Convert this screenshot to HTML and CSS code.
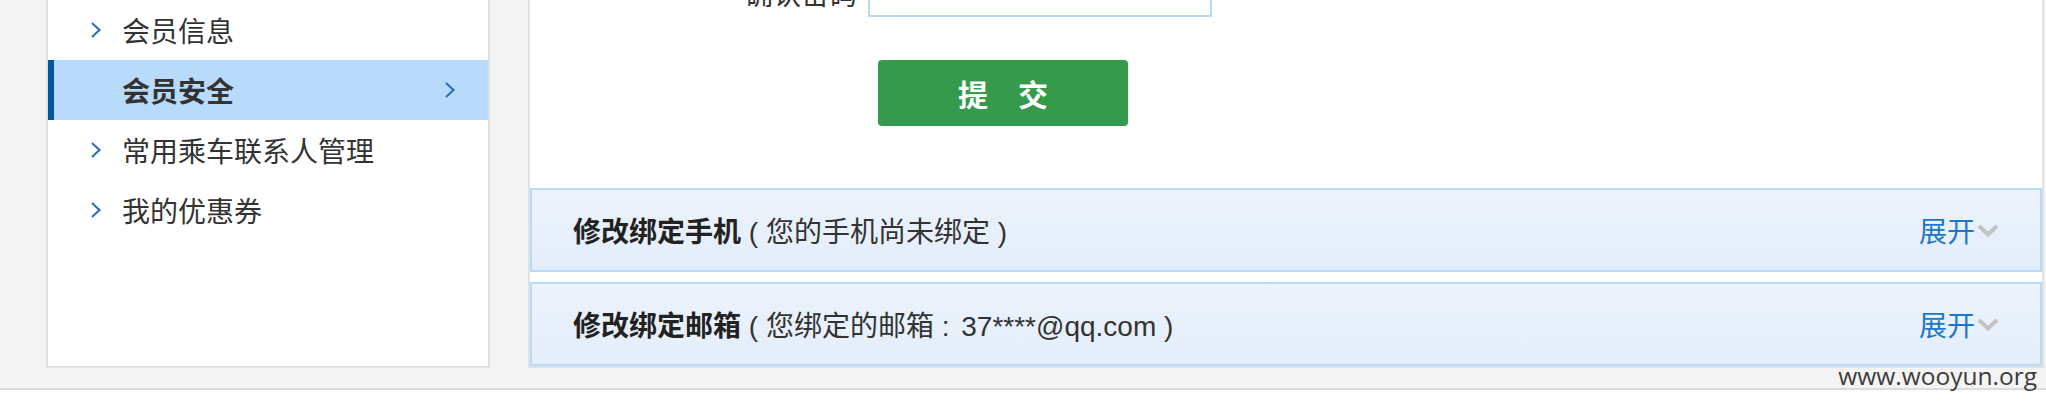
FILE: index.html
```html
<!DOCTYPE html>
<html lang="zh-CN">
<head>
<meta charset="utf-8">
<title>会员安全</title>
<link rel="stylesheet" href="styles.css">
</head>
<body>
<div class="page">
  <div class="layout">
    <aside class="sidebar">
      <ul class="menu">
        <li class="menu-item">
          <svg class="chev" viewBox="0 0 12 18"><polyline points="2,2 9.5,9 2,16"/></svg>
          <span>会员信息</span>
        </li>
        <li class="menu-item active">
          <span>会员安全</span>
          <svg class="chev" viewBox="0 0 12 18"><polyline points="2,2 9.5,9 2,16"/></svg>
        </li>
        <li class="menu-item">
          <svg class="chev" viewBox="0 0 12 18"><polyline points="2,2 9.5,9 2,16"/></svg>
          <span>常用乘车联系人管理</span>
        </li>
        <li class="menu-item">
          <svg class="chev" viewBox="0 0 12 18"><polyline points="2,2 9.5,9 2,16"/></svg>
          <span>我的优惠券</span>
        </li>
      </ul>
    </aside>
    <main class="main">
      <div class="form-row">
        <label class="form-label">确认密码</label>
        <div class="input"></div>
      </div>
      <button class="btn">提　交</button>
      <div class="acc-list">
        <div class="acc">
          <div class="acc-title"><b>修改绑定手机</b><span> ( 您的手机尚未绑定 )</span></div>
          <div class="acc-toggle">展开<svg class="down" viewBox="0 0 22 13"><polyline points="2,2 11,10.5 20,2"/></svg></div>
        </div>
        <div class="acc">
          <div class="acc-title"><b>修改绑定邮箱</b><span> ( 您绑定的邮箱<span class="colon"> : </span>37****@qq.com )</span></div>
          <div class="acc-toggle">展开<svg class="down" viewBox="0 0 22 13"><polyline points="2,2 11,10.5 20,2"/></svg></div>
        </div>
      </div>
    </main>
  </div>
  <footer class="footer"></footer>
  <div class="watermark">www.wooyun.org</div>
</div>
</body>
</html>
```

FILE: styles.css
```css
html, body {
  margin: 0;
  padding: 0;
}

body {
  background: #f4f4f4;
  font-family: "Liberation Sans", "Noto Sans CJK SC", sans-serif;
  font-size: 28px;
  color: #333;
  height: 406px;
  overflow: hidden;
}

.page {
  position: relative;
  height: 406px;
}

.layout {
  display: flex;
  align-items: stretch;
  gap: 38px;
  padding: 0 2px 20px 46px;
}

/* Sidebar */
.sidebar {
  width: 444px;
  box-sizing: border-box;
  background: #fff;
  border: 2px solid #e1e1e1;
  border-top: none;
}

.menu {
  list-style: none;
  margin: 0;
  padding: 0;
}

.menu-item {
  display: flex;
  align-items: center;
  height: 60px;
  padding-left: 42px;
  color: #333;
}

.menu-item .chev {
  width: 12px;
  height: 18px;
  margin-right: 20px;
  flex: none;
}

.chev polyline {
  fill: none;
  stroke: #2f70b8;
  stroke-width: 2.2;
}

.menu-item.active {
  background: #b8dbfb;
  border-left: 6px solid #0055a5;
  padding-left: 68px;
  padding-right: 32px;
  justify-content: space-between;
  font-weight: bold;
  color: #333;
}

.menu-item.active .chev {
  margin-right: 0;
}

/* Main */
.main {
  flex: 1;
  box-sizing: border-box;
  background: #fff;
  border: 2px solid #e1e1e1;
  border-top: none;
}

.form-row {
  display: flex;
  align-items: center;
  height: 48px;
  margin-top: -31px;
}

.form-label {
  width: 327px;
  margin-right: 11px;
  text-align: right;
  color: #333;
}

.input {
  width: 344px;
  height: 48px;
  box-sizing: border-box;
  border: 2px solid #b9d9f9;
  background: #fff;
}

.btn {
  display: block;
  margin: 43px 0 0 348px;
  width: 250px;
  height: 66px;
  padding: 0;
  border: none;
  border-radius: 4px;
  background: #359a4b;
  color: #fff;
  font-family: "Liberation Sans", "Noto Sans CJK SC", sans-serif;
  font-size: 30px;
  font-weight: bold;
}

.acc-list {
  margin-top: 62px;
  display: flex;
  flex-direction: column;
  gap: 10px;
}

.acc {
  height: 84px;
  box-sizing: border-box;
  border: 2px solid #b6dbfb;
  background: linear-gradient(#ecf3fc, #e3edfa);
  display: flex;
  align-items: center;
  justify-content: space-between;
  padding: 0 41px;
}

.acc-title {
  white-space: pre;
}

.acc-title b {
  font-weight: bold;
  color: #222;
}

.acc-title span {
  color: #333;
}

.acc-title .colon {
  margin-right: 4px;
}

.acc-toggle {
  display: flex;
  align-items: center;
  color: #1b78c8;
}

.down {
  width: 22px;
  height: 13px;
  margin-left: 2px;
}

.down polyline {
  fill: none;
  stroke: #c3c3c3;
  stroke-width: 4;
}

/* Footer */
.footer {
  border-top: 2px solid #dcdcdc;
  background: #fff;
  height: 16px;
}

.watermark {
  position: absolute;
  right: 9px;
  top: 359px;
  font-family: "Open Sans", sans-serif;
  font-size: 24.5px;
  color: #3c3c3c;
}
```
